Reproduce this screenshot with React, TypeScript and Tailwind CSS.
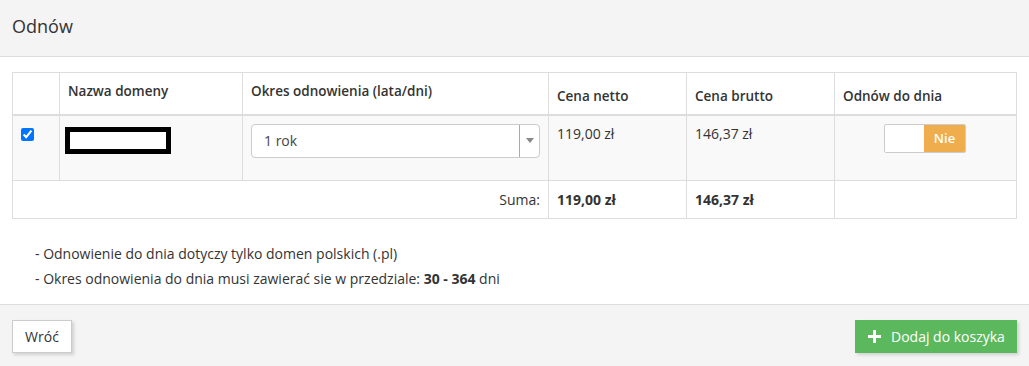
import React from 'react'

// ── Renew domains panel ───────────────────────────
export default function App() {
  const th = 'border border-[#ddd] px-2 text-left text-[13.5px] font-semibold text-[#333]'
  const td = 'border border-[#ddd] p-2 align-top'

  return (
    <div className="min-h-[366px] bg-white text-[14px] leading-[20px] text-[#333]" style={{ fontFamily: '"Open Sans", "DejaVu Sans", sans-serif' }}>
      {/* Header */}
      <div className="flex h-[57px] items-center border-b border-[#ddd] bg-[#f4f4f4] px-3 pb-[5px]">
        <h1 className="text-[18px] font-normal text-[#333]">Odnów</h1>
      </div>

      {/* Body */}
      <div className="px-3 pb-[13px] pt-[15px]">
        <table className="w-full border-collapse">
          <colgroup>
            <col className="w-[47px]" />
            <col className="w-[183px]" />
            <col className="w-[306px]" />
            <col className="w-[138px]" />
            <col className="w-[148px]" />
            <col />
          </colgroup>
          <thead>
            <tr className="h-[42px] border-b-2 border-[#ddd]">
              <th className={`${th} pt-2 align-top`}></th>
              <th className={`${th} pt-2 align-top`}>Nazwa domeny</th>
              <th className={`${th} pt-2 align-top`}>Okres odnowienia (lata/dni)</th>
              <th className={`${th} pb-2 align-bottom`}>Cena netto</th>
              <th className={`${th} pb-2 align-bottom`}>Cena brutto</th>
              <th className={`${th} pb-2 align-bottom`}>Odnów do dnia</th>
            </tr>
          </thead>
          <tbody>
            <tr className="h-[66px] bg-[#f9f9f9]">
              <td className={td}>
                <input type="checkbox" checked readOnly className="m-0 mt-[4px] h-[13px] w-[13px]" />
              </td>
              <td className={td}>
                <div className="-ml-[3px] mt-[3px] h-[27px] w-[106px] border-[5px] border-black bg-white" />
              </td>
              <td className={td}>
                <div className="flex h-[34px] w-full items-stretch rounded-[4px] border border-[#ccc] bg-white">
                  <span className="flex flex-1 items-center pl-3 text-[#444]">1 rok</span>
                  <span className="flex w-[20px] items-center justify-center border-l border-[#aaa]">
                    <span className="h-0 w-0 border-x-[4px] border-t-[5px] border-x-transparent border-t-[#888]" />
                  </span>
                </div>
              </td>
              <td className={td}>119,00 zł</td>
              <td className={td}>146,37 zł</td>
              <td className={`${td} text-center`}>
                <div className="-ml-px inline-flex h-[29px] w-[82px] overflow-hidden rounded-[2px] border border-[#ccc] bg-white">
                  <span className="flex-1" />
                  <span className="flex w-[41px] items-center justify-center bg-[#f0ad4e] text-[13px] font-semibold text-white">Nie</span>
                </div>
              </td>
            </tr>
            <tr className="h-[38px]">
              <td colSpan={3} className="border border-[#ddd] px-2 text-right">Suma:</td>
              <td className="border border-[#ddd] px-2 font-bold">119,00 zł</td>
              <td className="border border-[#ddd] px-2 font-bold">146,37 zł</td>
              <td className="border border-[#ddd] px-2"></td>
            </tr>
          </tbody>
        </table>

        {/* Notes */}
        <div className="mt-[22px] pl-[23px] leading-[25px]">
          <p>- Odnowienie do dnia dotyczy tylko domen polskich (.pl)</p>
          <p>- Okres odnowienia do dnia musi zawierać sie w przedziale: <b>30 - 364</b> dni</p>
        </div>
      </div>

      {/* Footer */}
      <div className="flex items-start justify-between border-t border-[#ddd] bg-[#f4f4f4] px-3 pb-[15px] pt-[15px]">
        <button className="h-[33px] w-[60px] border border-[#ccc] bg-white text-[#333] shadow-[2px_2px_3px_rgba(0,0,0,0.15)]">
          Wróć
        </button>
        <button className="flex h-[33px] w-[162px] items-center gap-[10px] bg-[#5cb85c] pl-[13px] text-white shadow-[2px_2px_3px_rgba(0,0,0,0.15)]">
          <svg width="13" height="13" viewBox="0 0 13 13" className="shrink-0">
            <path d="M5 0h3v5h5v3H8v5H5V8H0V5h5z" fill="#fff" />
          </svg>
          <span>Dodaj do koszyka</span>
        </button>
      </div>
    </div>
  )
}
